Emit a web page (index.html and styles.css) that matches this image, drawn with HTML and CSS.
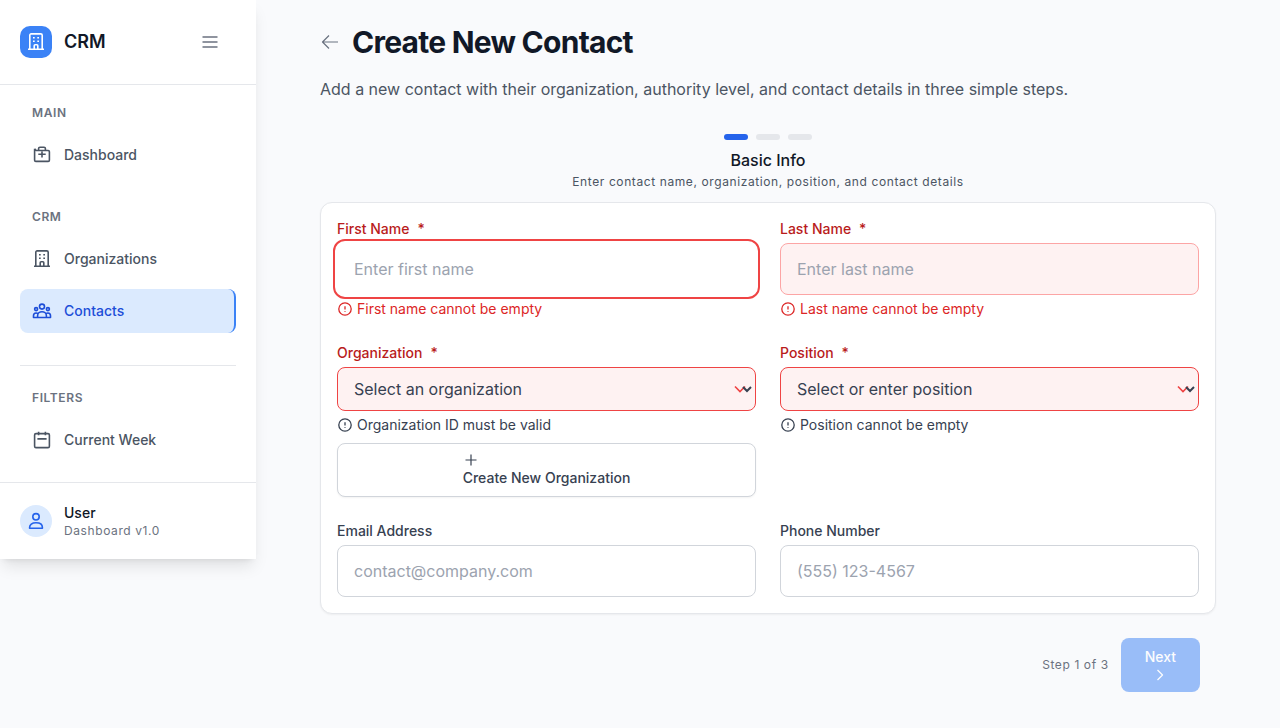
FILE: index.html
```html
<!DOCTYPE html>
<html lang="en">
<head>
<meta charset="utf-8">
<meta name="viewport" content="width=device-width, initial-scale=1">
<title>Create New Contact</title>
<link rel="stylesheet" href="styles.css">
</head>
<body>
<svg class="sprite" aria-hidden="true">
  <symbol id="building" viewBox="0 0 20 20"><path d="M2 17.3h16M3.800 17.300V3.300c0-.8.6-1.400 1.400-1.400h9.600c.8 0 1.400.6 1.400 1.400v14M8.200 17.300v-3.600c0-.5.4-.9.9-.9h1.800c.5 0 .9.4.9.9v3.600M7 5.700h1.700M11.300 5.700H13M7 9.200h1.700M11.300 9.200H13"/></symbol>
  <symbol id="briefcase" viewBox="0 0 20 20"><path d="M2.600 3.800v11.400c0 .7.5 1.200 1.200 1.200h12.400c.7 0 1.200-.5 1.200-1.200V6.700c0-.7-.5-1.200-1.200-1.200H4.200L2.600 3.800M6.600 5.500V3.600c0-.8.6-1.400 1.400-1.400h4c.8 0 1.400.6 1.400 1.400v1.900M6.300 9.200h7.400M10 6.500v6"/></symbol>
  <symbol id="people" viewBox="0 0 20 20"><circle cx="10" cy="5.600" r="2.500"/><circle cx="4.100" cy="8.100" r="1.500"/><circle cx="15.900" cy="8.100" r="1.500"/><path d="M5.600 16.500v-1.700a4.400 4.100 0 0 1 8.800 0v1.700zM5.600 16.500H1.500v-1.800c0-1.600 1.100-2.700 2.600-2.700.8 0 1.400.2 1.900.6M14.400 16.500h4.100v-1.800c0-1.600-1.100-2.700-2.600-2.700-.8 0-1.400.2-1.900.6"/></symbol>
  <symbol id="calendar" viewBox="0 0 20 20"><rect x="2.600" y="3.600" width="14.800" height="14" rx="1.400"/><path d="M6.600 1.800v3.400M13.400 1.800v3.400M5.400 8.900h9.200"/></symbol>
  <symbol id="person" viewBox="0 0 20 20"><circle cx="10" cy="5.800" r="3.200"/><path d="M3.600 17.200v-.8c0-2.700 2.300-4.600 6.400-4.600s6.400 1.900 6.400 4.600v.8z"/></symbol>
  <symbol id="alert" viewBox="0 0 16 16"><circle cx="8" cy="8" r="6.200"/><path d="M8 5.200v3.200M8 10.200v.8"/></symbol>
</svg>
<div class="layout">
  <aside class="sidebar">
    <header class="sidebar-header">
      <span class="logo"><svg class="icon"><use href="#building"/></svg></span>
      <span class="brand">CRM</span>
      <button class="menu-button" type="button" aria-label="Toggle menu"><svg class="icon" viewBox="0 0 20 20"><path d="M2.500 5h15M2.500 10h15M2.500 15h15"/></svg></button>
    </header>
    <nav class="nav" aria-label="Main navigation">
      <section class="nav-section">
        <h2 class="nav-title">MAIN</h2>
        <a class="nav-item" href="#dashboard"><svg class="icon"><use href="#briefcase"/></svg>Dashboard</a>
      </section>
      <section class="nav-section">
        <h2 class="nav-title">CRM</h2>
        <a class="nav-item" href="#organizations"><svg class="icon"><use href="#building"/></svg>Organizations</a>
        <a class="nav-item nav-item-active" href="#contacts" aria-current="page"><svg class="icon"><use href="#people"/></svg>Contacts</a>
      </section>
      <section class="nav-section nav-section-divided">
        <h2 class="nav-title">FILTERS</h2>
        <a class="nav-item" href="#week"><svg class="icon"><use href="#calendar"/></svg>Current Week</a>
      </section>
    </nav>
    <footer class="account">
      <span class="avatar"><svg class="icon"><use href="#person"/></svg></span>
      <div>
        <p class="account-name">User</p>
        <p class="account-note">Dashboard v1.0</p>
      </div>
    </footer>
  </aside>
  <main class="main">
    <div class="title-row">
      <a class="back" href="#contacts" aria-label="Back to contacts"><svg class="icon icon-thin" viewBox="0 0 20 20"><path d="M18 10H2.500M9 3.500 2.500 10 9 16.500"/></svg></a>
      <h1 class="title">Create New Contact</h1>
    </div>
    <p class="subtitle">Add a new contact with their organization, authority level, and contact details in three simple steps.</p>
    <div class="progress"><span class="bar bar-active"></span><span class="bar"></span><span class="bar"></span></div>
    <h2 class="step-title">Basic Info</h2>
    <p class="step-note">Enter contact name, organization, position, and contact details</p>
    <form class="form">
      <div class="card">
        <div class="field">
          <label class="label label-invalid" for="first">First Name<span>*</span></label>
          <input class="input input-focused" id="first" type="text" placeholder="Enter first name">
          <p class="message message-error"><svg class="icon icon-small"><use href="#alert"/></svg>First name cannot be empty</p>
        </div>
        <div class="field">
          <label class="label label-invalid" for="last">Last Name<span>*</span></label>
          <input class="input input-invalid" id="last" type="text" placeholder="Enter last name">
          <p class="message message-error"><svg class="icon icon-small"><use href="#alert"/></svg>Last name cannot be empty</p>
        </div>
        <div class="field">
          <label class="label label-invalid" for="organization">Organization<span>*</span></label>
          <select class="select" id="organization"><option>Select an organization</option></select>
          <p class="message"><svg class="icon icon-small"><use href="#alert"/></svg>Organization ID must be valid</p>
          <button class="create-button" type="button"><span><svg class="icon icon-small icon-thin" viewBox="0 0 16 16"><path d="M8 2.500v11M2.500 8h11"/></svg>Create New Organization</span></button>
        </div>
        <div class="field">
          <label class="label label-invalid" for="position">Position<span>*</span></label>
          <select class="select" id="position"><option>Select or enter position</option></select>
          <p class="message"><svg class="icon icon-small"><use href="#alert"/></svg>Position cannot be empty</p>
        </div>
        <div class="field">
          <label class="label" for="email">Email Address</label>
          <input class="input" id="email" type="email" placeholder="contact@company.com">
        </div>
        <div class="field">
          <label class="label" for="phone">Phone Number</label>
          <input class="input" id="phone" type="tel" placeholder="(555) 123-4567">
        </div>
      </div>
      <div class="actions">
        <span class="step-count">Step 1 of 3</span>
        <button class="next-button" type="submit" disabled>Next<svg class="icon icon-small" viewBox="0 0 16 16"><path d="m5.500 3 5 5-5 5"/></svg></button>
      </div>
    </form>
  </main>
</div>
</body>
</html>
```
FILE: styles.css
```css
:root { --tracking-tight: -.025em; --tracking-wide: .05em; }
* { box-sizing: border-box; }
body { margin: 0; background: #f9fafc; color: #111827; font: 14px/20px Inter, sans-serif; }
h1, h2, p { margin: 0; }
a { color: inherit; text-decoration: none; }
button, input, select { font: inherit; }
.sprite { position: absolute; width: 0; height: 0; }
.icon { display: block; flex: none; width: 20px; height: 20px; fill: none; stroke: currentColor; stroke-width: 1.6; stroke-linejoin: round; }
.icon-small { width: 16px; height: 16px; stroke-width: 1.3; }
.icon-thin { stroke-width: 1.2; }

.layout { display: flex; align-items: flex-start; min-height: 100vh; }
.sidebar { flex: none; width: 256px; background: #fff; box-shadow: 0 10px 15px -3px rgba(0, 0, 0, .1), 0 4px 6px -4px rgba(0, 0, 0, .1); }
.sidebar-header { display: flex; align-items: center; gap: 12px; padding: 20px 24px 20px 20px; border-bottom: 1px solid #e5e7eb; }
.logo { display: grid; place-items: center; width: 32px; height: 32px; border-radius: 10px; background: #3b82f6; color: #fff; }
.brand { flex: 1; font-size: 18px; font-weight: 600; line-height: 28px; }
.menu-button { display: grid; place-items: center; width: 44px; height: 44px; padding: 0; border: 0; background: none; color: #6b7280; }
.nav { display: flex; flex-direction: column; gap: 32px; padding: 20px; }
.nav-section { display: flex; flex-direction: column; gap: 8px; }
.nav-section-divided { padding-top: 24px; border-top: 1px solid #e5e7eb; }
.nav-title { margin-bottom: 4px; padding: 0 12px; color: #6b7280; font-size: 12px; font-weight: 600; line-height: 16px; letter-spacing: var(--tracking-wide); }
.nav-item { display: flex; align-items: center; gap: 12px; height: 44px; padding: 0 12px; border-radius: 8px; color: #4b5563; font-weight: 500; }
.nav-item-active { border-right: 2px solid #3b82f6; background: #dbeafe; color: #1d4ed8; }
.account { display: flex; align-items: center; gap: 12px; padding: 20px; border-top: 1px solid #e5e7eb; }
.avatar { display: grid; place-items: center; width: 32px; height: 32px; border-radius: 50%; background: #dbeafe; color: #2563eb; }
.account-name { font-weight: 500; }
.account-note { color: #6b7280; font-size: 12px; line-height: 16px; letter-spacing: var(--tracking-wide); }

.main { flex: 1; min-width: 0; padding: 24px 64px 36px; }
.title-row { display: flex; align-items: center; gap: 12px; }
.back { color: #6b7280; }
.title { font-size: 30px; font-weight: 700; line-height: 36px; letter-spacing: var(--tracking-tight); }
.subtitle { margin-top: 16px; color: #4b5563; font-size: 16px; line-height: 26px; }
.progress { display: flex; justify-content: center; gap: 8px; margin-top: 32px; }
.bar { width: 24px; height: 6px; border-radius: 3px; background: #e5e7eb; }
.bar-active { background: #2563eb; }
.step-title { margin-top: 8px; font-size: 16px; font-weight: 500; line-height: 24px; text-align: center; }
.step-note { margin: 2px 0 12px; color: #4b5563; font-size: 12px; line-height: 16px; letter-spacing: var(--tracking-wide); text-align: center; }
.card { display: grid; grid-template-columns: 1fr 1fr; gap: 24px; padding: 16px; border: 1px solid #e5e7eb; border-radius: 12px; background: #fff; box-shadow: 0 1px 2px rgba(0, 0, 0, .05); }
.field { display: flex; flex-direction: column; gap: 4px; min-width: 0; }
.label { display: flex; gap: 8px; color: #374151; font-weight: 500; }
.label-invalid { color: #b91c1c; }
.input, .select { width: 100%; border: 1px solid #d1d5db; border-radius: 8px; background-color: #fff; color: #374151; font-size: 16px; line-height: 24px; }
.input { height: 52px; padding: 0 16px; }
.input::placeholder { color: #9ca3af; opacity: 1; }
.input-invalid { border-color: #fca5a5; background-color: #fef2f2; }
.input-focused { border-color: transparent; outline: 2px solid #ef4444; outline-offset: 2px; }
.select { height: 44px; padding: 0 40px 0 12px; border-color: #ef4444; background: #fef2f2 url("data:image/svg+xml,%3Csvg xmlns='http://www.w3.org/2000/svg' viewBox='0 0 24 24' fill='none' stroke='%23ef4444' stroke-width='2'%3E%3Cpath d='m6 9 6 6 6-6'/%3E%3C/svg%3E") no-repeat right 5px center / 20px 20px; }
.message { display: flex; align-items: center; gap: 4px; color: #374151; }
.message-error { color: #dc2626; }
.create-button { display: flex; justify-content: center; margin-top: 4px; padding: 8px 16px; border: 1px solid #d1d5db; border-radius: 8px; background: #fff; box-shadow: 0 1px 2px rgba(0, 0, 0, .05); color: #374151; font-weight: 500; text-align: left; }
.actions { display: flex; align-items: center; justify-content: flex-end; gap: 12px; padding: 24px 16px 0; }
.step-count { color: #6b7280; font-size: 12px; line-height: 16px; letter-spacing: var(--tracking-wide); }
.next-button { display: flex; flex-direction: column; align-items: center; padding: 9px 24px; border: 0; border-radius: 8px; background: #3b82f6; color: #fff; font-weight: 500; opacity: .5; }
```
